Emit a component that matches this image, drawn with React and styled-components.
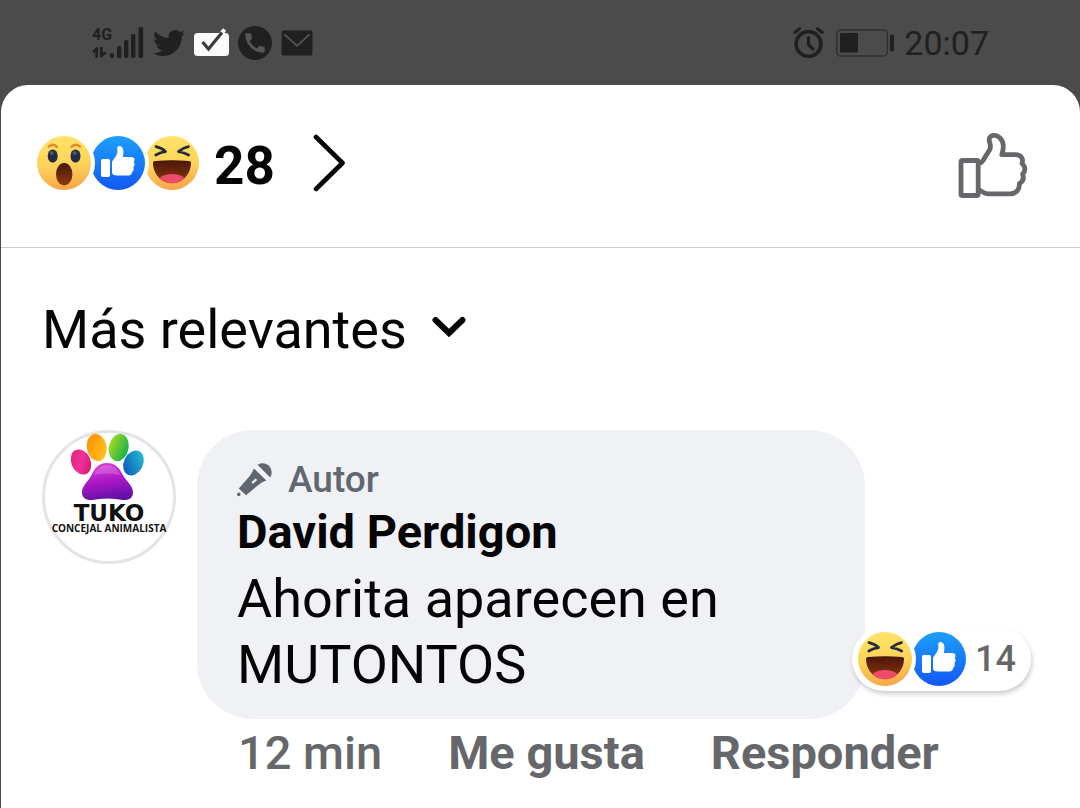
import styled, { createGlobalStyle } from "styled-components";
import { FaTwitter } from "react-icons/fa";
import { MdCall } from "react-icons/md";

const GlobalStyle = createGlobalStyle`
  * {
    box-sizing: border-box;
  }
  body {
    margin: 0;
    background: #4b4b4b;
    font-family: Roboto, "Liberation Sans", sans-serif;
    color: #050505;
  }
  #root {
    min-height: 100vh;
    display: flex;
    flex-direction: column;
  }
  svg {
    display: block;
    flex-shrink: 0;
  }
`;

//phone status bar
const StatusBar = styled.header`
  display: flex;
  align-items: center;
  justify-content: space-between;
  height: 85px;
  padding: 0 91px 0 92px;
  color: #202020;
`;

const StatusGroup = styled.div`
  display: flex;
  align-items: center;
  gap: ${(props) => props.$gap};
`;

const Network = styled.div`
  display: flex;
  align-items: flex-end;
  gap: 2px;
`;

const NetworkType = styled.div`
  display: flex;
  flex-direction: column;
  gap: 4px;
  width: 16px;
  font-size: 16px;
  font-weight: 700;
  line-height: 16px;
`;

const CallBadge = styled.span`
  display: flex;
  align-items: center;
  justify-content: center;
  width: 34px;
  height: 34px;
  border-radius: 50%;
  background: #202020;
  color: #555;
`;

const Clock = styled.time`
  font-size: 34px;
  line-height: 40px;
`;

//comments sheet
const Sheet = styled.main`
  flex: 1;
  margin-left: 1px;
  border-radius: 27px 27px 0 0;
  background: #fff;
`;

const SheetHeader = styled.div`
  display: flex;
  align-items: center;
  justify-content: space-between;
  height: 163px;
  padding: 0 52px 6px 36px;
  border-bottom: 1px solid #cccccc;
`;

const PlainButton = styled.button`
  padding: 0;
  border: 0;
  background: none;
  color: inherit;
  font: inherit;
  cursor: pointer;
`;

const LikeButton = styled(PlainButton)`
  padding-top: 6px;
`;

const ReactionSummary = styled(PlainButton)`
  display: flex;
  align-items: center;
`;

const ReactionStack = styled.span`
  display: flex;
  isolation: isolate;
`;

const Reaction = styled.span`
  position: relative;
  z-index: ${(props) => props.$level};
  width: 54px;
  height: 54px;
  border-radius: 50%;
  box-shadow: 0 0 0 4px #fff;
`;

const ReactionCount = styled.span`
  margin: 6px 38px 0 15px;
  font-size: 53px;
  font-weight: 700;
  line-height: 60px;
`;

const SortButton = styled(PlainButton)`
  display: flex;
  align-items: center;
  gap: 25px;
  margin: 48px 0 0 41px;
  font-size: 54px;
  line-height: 68px;
`;

const Comment = styled.article`
  display: flex;
  align-items: flex-start;
  gap: 21px;
  margin-top: 66px;
  padding-left: 41px;
`;

const Avatar = styled.a`
  display: flex;
  flex-direction: column;
  align-items: center;
  flex-shrink: 0;
  width: 134px;
  height: 134px;
  border: 3px solid #e4e4e4;
  border-radius: 50%;
  color: #111;
  text-decoration: none;
  white-space: nowrap;
`;

const LogoName = styled.span`
  font-family: "DejaVu Sans", sans-serif;
  font-size: 23px;
  font-weight: 700;
  line-height: 20px;
`;

const LogoTagline = styled.span`
  font-family: "Open Sans", sans-serif;
  font-size: 10px;
  font-weight: 700;
  line-height: 10px;
`;

const CommentContent = styled.div`
  flex: 1;
`;

const Bubble = styled.div`
  position: relative;
  margin-right: 215px;
  padding: 32px 40px 21px;
  border-radius: 56px;
  background: #f0f1f5;
`;

const AuthorTag = styled.div`
  display: flex;
  align-items: center;
  gap: 16px;
  color: #606770;
  font-size: 37px;
  font-weight: 500;
  line-height: 36px;
`;

const AuthorName = styled.a`
  display: block;
  color: #050505;
  font-size: 47px;
  font-weight: 700;
  line-height: 68px;
  text-decoration: none;
`;

const CommentText = styled.p`
  margin: 0;
  font-size: 54px;
  line-height: 66px;
`;

const ReactionPill = styled(PlainButton)`
  position: absolute;
  left: calc(100% - 13px);
  bottom: 28px;
  display: flex;
  align-items: center;
  gap: 9px;
  padding: 5px 15px 5px 6px;
  border-radius: 32px;
  background: #fff;
  box-shadow: 1px 3px 5px rgba(0, 0, 0, 0.2);
  color: #65676b;
  font-size: 36px;
  font-weight: 500;
`;

const Actions = styled.div`
  display: flex;
  gap: 66px;
  padding: 6px 0 0 41px;
  color: #65676b;
  font-size: 47px;
  font-weight: 500;
  line-height: 56px;
`;

const Action = styled(PlainButton)`
  font-weight: 700;
`;

function Gradients() {
  return (
    <svg width="0" height="0" style={{ position: "absolute" }} aria-hidden="true">
      <defs>
        <linearGradient id="face" x1="0.4" y1="0" x2="0.5" y2="1">
          <stop offset="0" stopColor="#ffe368" />
          <stop offset="0.55" stopColor="#fdd25a" />
          <stop offset="1" stopColor="#f6a548" />
        </linearGradient>
        <linearGradient id="blue" x1="0.5" y1="0" x2="0.5" y2="1">
          <stop offset="0" stopColor="#1ca0f8" />
          <stop offset="1" stopColor="#1358f5" />
        </linearGradient>
        <linearGradient id="mouth" x1="0" y1="0" x2="0" y2="1">
          <stop offset="0" stopColor="#4a1608" />
          <stop offset="1" stopColor="#8c3a10" />
        </linearGradient>
        <linearGradient id="pink" x1="0" y1="0" x2="1" y2="1">
          <stop offset="0" stopColor="#e3206a" />
          <stop offset="0.5" stopColor="#f0309a" />
          <stop offset="1" stopColor="#d2125c" />
        </linearGradient>
        <linearGradient id="orange" x1="0" y1="0" x2="1" y2="1">
          <stop offset="0" stopColor="#ff8a00" />
          <stop offset="1" stopColor="#ffcb1f" />
        </linearGradient>
        <linearGradient id="green" x1="0" y1="0.3" x2="1" y2="0.6">
          <stop offset="0" stopColor="#a6dc20" />
          <stop offset="1" stopColor="#16b04a" />
        </linearGradient>
        <linearGradient id="sea" x1="0.8" y1="0" x2="0.2" y2="1">
          <stop offset="0" stopColor="#28bfd0" />
          <stop offset="1" stopColor="#0b55b8" />
        </linearGradient>
        <linearGradient id="purple" x1="0.4" y1="0" x2="0.6" y2="1">
          <stop offset="0" stopColor="#d93fd6" />
          <stop offset="0.5" stopColor="#a916c4" />
          <stop offset="1" stopColor="#5d10a4" />
        </linearGradient>
      </defs>
    </svg>
  );
}

function Wow() {
  return (
    <svg width="54" height="54" viewBox="0 0 54 54" fill="none">
      <circle cx="27" cy="27" r="27" fill="url(#face)" />
      <path
        d="M11.7 10.6Q16 6.6 20 10.8M34.5 10.8Q38.5 6.6 43 10.6"
        stroke="#e58b2c"
        strokeWidth="2.4"
        strokeLinecap="round"
      />
      <ellipse cx="15.7" cy="20" rx="5" ry="6.6" fill="#242b45" />
      <ellipse cx="38.5" cy="20" rx="5" ry="6.6" fill="#242b45" />
      <ellipse cx="14.8" cy="17" rx="2" ry="2" fill="#4d5a7a" />
      <ellipse cx="37.6" cy="17" rx="2" ry="2" fill="#4d5a7a" />
      <ellipse cx="27.2" cy="38.2" rx="8.2" ry="11.2" fill="url(#mouth)" />
    </svg>
  );
}

function Like() {
  return (
    <svg width="54" height="54" viewBox="0 0 54 54">
      <circle cx="27" cy="27" r="27" fill="url(#blue)" />
      <g fill="#fff">
        <rect x="10" y="23" width="9" height="18" rx="1.8" />
        <path d="M21 26.5C21 24.5 22.5 24 24 21.5C25.3 19.3 26.6 17.5 26.3 15V12C26.3 10 28 9.4 29.8 10.3C32.6 11.8 33 16 31.8 21H40.3C43.4 21 44.4 24 42.7 26C44.2 27.6 43.8 30 42.4 31.2C43.3 33 42.6 34.9 41.3 35.6C41.3 38 39.9 39.5 37.2 39.5H26C23 39.5 21 38.5 21 36.5Z" />
      </g>
    </svg>
  );
}

function Haha() {
  return (
    <svg width="54" height="54" viewBox="0 0 54 54" fill="none">
      <circle cx="27" cy="27" r="27" fill="url(#face)" />
      <path
        d="M11 10.6Q17 12 20.5 15.6Q15.5 16.2 10.8 19M43.4 10.6Q37.4 12 33.5 15.6Q38.5 16.2 43.6 19"
        stroke="#262c38"
        strokeWidth="2.8"
        strokeLinecap="round"
        strokeLinejoin="round"
      />
      <path
        d="M8 26.6C8 25.4 9 25 10.4 24.9Q27 23.6 43.8 24.9C45.2 25 46 25.4 46 26.6C46 38.5 37.5 47.3 27 47.3S8 38.5 8 26.6Z"
        fill="url(#mouth)"
      />
      <path
        d="M14.6 42.2C17.5 39 22 38 27 38S36.5 39 39.4 42.2C36 45.5 32 47.3 27 47.3S18 45.5 14.6 42.2Z"
        fill="#ed4b69"
      />
    </svg>
  );
}

function SignalIcons() {
  return (
    <Network>
      <NetworkType>
        4G
        <svg width="15" height="11" viewBox="0 0 15 11" fill="none" stroke="currentColor" strokeWidth="2.8">
          <path d="M1 5.4L4.7 1.5V10.5M9.3 0V9L13.5 5.2" strokeLinejoin="round" />
        </svg>
      </NetworkType>
      <svg width="34" height="31" viewBox="0 0 34 31" fill="currentColor">
        <rect x="0" y="26" width="3.8" height="5" rx="1.5" />
        <rect x="7" y="19" width="4.4" height="12" rx="1.5" />
        <rect x="14" y="13" width="4.4" height="18" rx="1.5" />
        <rect x="21" y="7" width="4.4" height="24" rx="1.5" />
        <rect x="28.5" y="0" width="4.6" height="31" rx="1.5" />
      </svg>
    </Network>
  );
}

function CheckIcon() {
  return (
    <svg width="35" height="30" viewBox="0 0 35 30" fill="none">
      <rect x="0" y="5" width="35" height="23" rx="3.5" fill="#fafafa" />
      <path d="M27 6L30.5 1.5" stroke="#fafafa" strokeWidth="4" />
      <path d="M8.5 14L14.5 21L28 4.5" stroke="#3c3c3c" strokeWidth="3.2" />
    </svg>
  );
}

function MailIcon() {
  return (
    <svg width="32" height="26" viewBox="0 0 33 27" fill="none">
      <rect x="0.5" y="0.5" width="32" height="26" rx="2" fill="#202020" />
      <path d="M3.5 4.5L16.5 16.5L29.5 4.5" stroke="#565656" strokeWidth="1.8" />
    </svg>
  );
}

function AlarmIcon() {
  return (
    <svg width="33" height="31" viewBox="0 0 33 31" fill="none" stroke="currentColor" strokeLinecap="round">
      <circle cx="15.5" cy="17" r="12.4" strokeWidth="3.6" />
      <path d="M15.5 10.5V17.5L20 22" strokeWidth="3.2" />
      <path d="M1.8 5.4L6.5 1.8M29.2 5.4L24.5 1.8" strokeWidth="3.2" />
    </svg>
  );
}

function BatteryIcon() {
  return (
    <svg width="58" height="28" viewBox="0 0 58 28" fill="currentColor">
      <rect x="0.8" y="1" width="50.5" height="26" rx="4" fill="none" stroke="#303030" strokeWidth="1.6" />
      <rect x="4" y="4" width="18" height="19.5" rx="1" />
      <rect x="54" y="5.5" width="4" height="17" rx="1.8" />
    </svg>
  );
}

function LikeOutline() {
  return (
    <svg width="70" height="68" viewBox="0 0 70 68" fill="none" stroke="#65676b" strokeWidth="4.8" strokeLinejoin="round">
      <rect x="3" y="28.5" width="17.2" height="35" rx="1.5" />
      <path d="M20.5 31.5Q23.5 31 25 28.5L31.5 18C33 15.3 32.8 13.5 31.8 11C30.2 6.5 32 3.4 36 3.4C41 3.4 45 8 45.3 14C45.4 17 44.6 20 43.8 22.7H57.5C62.8 22.7 65.8 26.5 64 31.5C67.6 34.5 67.8 39 64.6 42C66.2 46 64.8 49.5 61.4 51.5C61.8 57.5 58 61.8 52.5 61.8H31C27 61.8 24 60 20.5 57.3" />
    </svg>
  );
}

function MicIcon() {
  return (
    <svg width="35" height="34" viewBox="0 0 35 34" fill="currentColor">
      <path d="M20.5 1.8C24.5-1 30-.2 32.8 3.8C35 7 35.3 11.2 33.2 14.4Z" />
      <path
        fillRule="evenodd"
        d="M16.8 5.4L29.4 17.4C26 18.6 23.5 20 20.8 22.4L9 32.2L1.8 25.6L11.4 14.6C13.6 12 15.2 9.2 16.8 5.4ZM14.4 19.2L16 20.8L20.2 17L18.6 15.4Z"
      />
      <circle cx="1.8" cy="31.4" r="1.8" />
    </svg>
  );
}

function Paw() {
  return (
    <svg width="86" height="70" viewBox="24 2 86 70">
      <ellipse cx="39" cy="31" rx="9.6" ry="13" transform="rotate(-24 39 31)" fill="url(#pink)" />
      <ellipse cx="54.7" cy="16.5" rx="9.8" ry="13.8" transform="rotate(-10 54.7 16.5)" fill="url(#orange)" />
      <ellipse cx="76.7" cy="16.5" rx="9.8" ry="13.8" transform="rotate(12 76.7 16.5)" fill="url(#green)" />
      <ellipse cx="91.5" cy="32" rx="9.6" ry="13" transform="rotate(26 91.5 32)" fill="url(#sea)" />
      <path
        d="M65 32C74 32 78 38 81.5 45C84.5 50.5 91 54.5 91 61.5C91 67 86.5 69.6 81 69C76 68.4 71 67.6 65.5 67.6S55 68.4 50 69C44.5 69.6 40 67 40 61.5C40 54.5 46 50.5 49 45C52.5 38 56 32 65 32Z"
        fill="url(#purple)"
      />
      <path d="M65 34C72 34 75.5 38.5 78.5 44Q65 41 51.5 44C54.5 38.5 58 34 65 34Z" fill="#fff" opacity="0.18" />
    </svg>
  );
}

export default function App() {
  return (
    <>
      <GlobalStyle />
      <Gradients />
      <StatusBar>
        <StatusGroup $gap="9px">
          <SignalIcons />
          <FaTwitter size={32} />
          <CheckIcon />
          <CallBadge>
            <MdCall size={26} />
          </CallBadge>
          <MailIcon />
        </StatusGroup>
        <StatusGroup $gap="10px">
          <AlarmIcon />
          <BatteryIcon />
          <Clock>20:07</Clock>
        </StatusGroup>
      </StatusBar>
      <Sheet>
        <SheetHeader>
          <ReactionSummary>
            <ReactionStack>
              <Reaction $level={3}>
                <Wow />
              </Reaction>
              <Reaction $level={2}>
                <Like />
              </Reaction>
              <Reaction $level={1}>
                <Haha />
              </Reaction>
            </ReactionStack>
            <ReactionCount>28</ReactionCount>
            <svg width="32" height="58" viewBox="0 0 32 58" fill="none" stroke="#050505">
              <path d="M3 3L29.5 29L3 55" strokeWidth="4.6" strokeLinecap="round" strokeLinejoin="round" />
            </svg>
          </ReactionSummary>
          <LikeButton aria-label="Me gusta">
            <LikeOutline />
          </LikeButton>
        </SheetHeader>
        <SortButton>
          Más relevantes
          <svg width="34" height="28" viewBox="0 0 34 28" fill="none" stroke="#050505">
            <path d="M3.5 4L17 17L30.5 4" strokeWidth="6" strokeLinecap="round" />
          </svg>
        </SortButton>
        <Comment>
          <Avatar href="#perfil">
            <Paw />
            <LogoName>TUKO</LogoName>
            <LogoTagline>CONCEJAL ANIMALISTA</LogoTagline>
          </Avatar>
          <CommentContent>
            <Bubble>
              <AuthorTag>
                <MicIcon />
                Autor
              </AuthorTag>
              <AuthorName href="#perfil">David Perdigon</AuthorName>
              <CommentText>Ahorita aparecen en MUTONTOS</CommentText>
              <ReactionPill>
                <ReactionStack>
                  <Reaction $level={2}>
                    <Haha />
                  </Reaction>
                  <Reaction $level={1}>
                    <Like />
                  </Reaction>
                </ReactionStack>
                14
              </ReactionPill>
            </Bubble>
            <Actions>
              <span>12 min</span>
              <Action>Me gusta</Action>
              <Action>Responder</Action>
            </Actions>
          </CommentContent>
        </Comment>
      </Sheet>
    </>
  );
}
